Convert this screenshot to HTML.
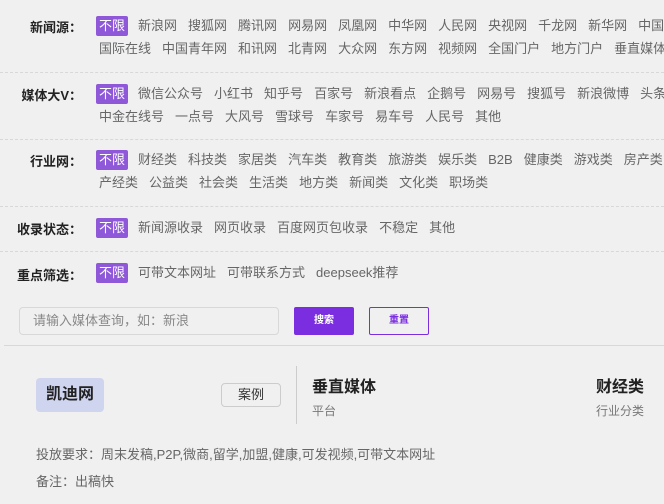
<!DOCTYPE html>
<html><head><meta charset="utf-8"><style>
*{margin:0;padding:0;box-sizing:border-box}
body{width:664px;height:504px;overflow:hidden;background:#f0f0f0;font-family:"Liberation Sans","Noto Sans CJK SC",sans-serif;color:#666;font-size:13px;position:relative}
.row{position:absolute;left:0;width:664px;border-bottom:1px dashed #d8d8d8}
.lab{position:absolute;left:0;width:82px;text-align:right;color:#222;font-weight:bold;font-size:13px}
.line{position:absolute;left:96px;white-space:nowrap;height:20px;line-height:20px}
.line span{margin-right:9px;display:inline-block;padding:0 1px}
.line span.on{background:#8e58d8;color:#fff;border-radius:2px;padding:0 3px}
.abs{position:absolute}
</style></head><body>
<div class="row" style="top:0;height:73px">
<div class="lab" style="top:17px">新闻源：</div>
<div class="line" style="top:16px"><span class="on">不限</span><span>新浪网</span><span>搜狐网</span><span>腾讯网</span><span>网易网</span><span>凤凰网</span><span>中华网</span><span>人民网</span><span>央视网</span><span>千龙网</span><span>新华网</span><span>中国网</span></div>
<div class="line" style="top:39px;left:98px"><span>国际在线</span><span>中国青年网</span><span>和讯网</span><span>北青网</span><span>大众网</span><span>东方网</span><span>视频网</span><span>全国门户</span><span>地方门户</span><span>垂直媒体</span></div>
</div>
<div class="row" style="top:73px;height:67px">
<div class="lab" style="top:12px">媒体大V：</div>
<div class="line" style="top:11px"><span class="on">不限</span><span>微信公众号</span><span>小红书</span><span>知乎号</span><span>百家号</span><span>新浪看点</span><span>企鹅号</span><span>网易号</span><span>搜狐号</span><span>新浪微博</span><span>头条号</span></div>
<div class="line" style="top:34px;left:98px"><span>中金在线号</span><span>一点号</span><span>大风号</span><span>雪球号</span><span>车家号</span><span>易车号</span><span>人民号</span><span>其他</span></div>
</div>
<div class="row" style="top:140px;height:67px">
<div class="lab" style="top:11px">行业网：</div>
<div class="line" style="top:10px"><span class="on">不限</span><span>财经类</span><span>科技类</span><span>家居类</span><span>汽车类</span><span>教育类</span><span>旅游类</span><span>娱乐类</span><span>B2B</span><span>健康类</span><span>游戏类</span><span>房产类</span></div>
<div class="line" style="top:33px;left:98px"><span>产经类</span><span>公益类</span><span>社会类</span><span>生活类</span><span>地方类</span><span>新闻类</span><span>文化类</span><span>职场类</span></div>
</div>
<div class="row" style="top:207px;height:45px">
<div class="lab" style="top:12px">收录状态：</div>
<div class="line" style="top:11px"><span class="on">不限</span><span>新闻源收录</span><span>网页收录</span><span>百度网页包收录</span><span>不稳定</span><span>其他</span></div>
</div>
<div class="lab" style="top:265px">重点筛选：</div>
<div class="line" style="top:263px"><span class="on">不限</span><span>可带文本网址</span><span>可带联系方式</span><span>deepseek推荐</span></div>
<div class="abs" style="left:19px;top:307px;width:260px;height:28px;border:1px solid #d8d8d8;border-radius:4px;line-height:26px;padding-left:13px;color:#888;font-size:13px">请输入媒体查询，如：新浪</div>
<div class="abs" style="left:294px;top:307px;width:60px;height:28px;background:#7a2ee0;border-radius:2px;color:#fff;font-size:10px;font-weight:bold;text-align:center;line-height:28px">搜索</div>
<div class="abs" style="left:369px;top:307px;width:60px;height:28px;border:1px solid #7a2ee0;border-radius:2px;color:#7a2ee0;font-size:10px;font-weight:bold;text-align:center;line-height:26px">重置</div>
<div class="abs" style="left:4px;top:345px;width:660px;height:1px;background:#d8d8d8"></div>
<div class="abs" style="left:36px;top:378px;width:68px;height:34px;background:#cfd4ef;border-radius:4px;color:#222;font-size:16px;font-weight:bold;text-align:center;line-height:34px">凯迪网</div>
<div class="abs" style="left:221px;top:383px;width:60px;height:24px;border:1px solid #ccc;border-radius:4px;color:#333;text-align:center;line-height:22px">案例</div>
<div class="abs" style="left:296px;top:366px;width:1px;height:58px;background:#ccc"></div>
<div class="abs" style="left:312px;top:373px;color:#222;font-size:16px;font-weight:bold">垂直媒体</div>
<div class="abs" style="left:312px;top:402px;color:#777;font-size:12px">平台</div>
<div class="abs" style="left:596px;top:373px;color:#222;font-size:16px;font-weight:bold">财经类</div>
<div class="abs" style="left:596px;top:402px;color:#777;font-size:12px">行业分类</div>
<div class="abs" style="left:36px;top:444px;color:#666;white-space:nowrap">投放要求：周末发稿,P2P,微商,留学,加盟,健康,可发视频,可带文本网址</div>
<div class="abs" style="left:36px;top:471px;color:#666">备注：出稿快</div>
</body></html>
